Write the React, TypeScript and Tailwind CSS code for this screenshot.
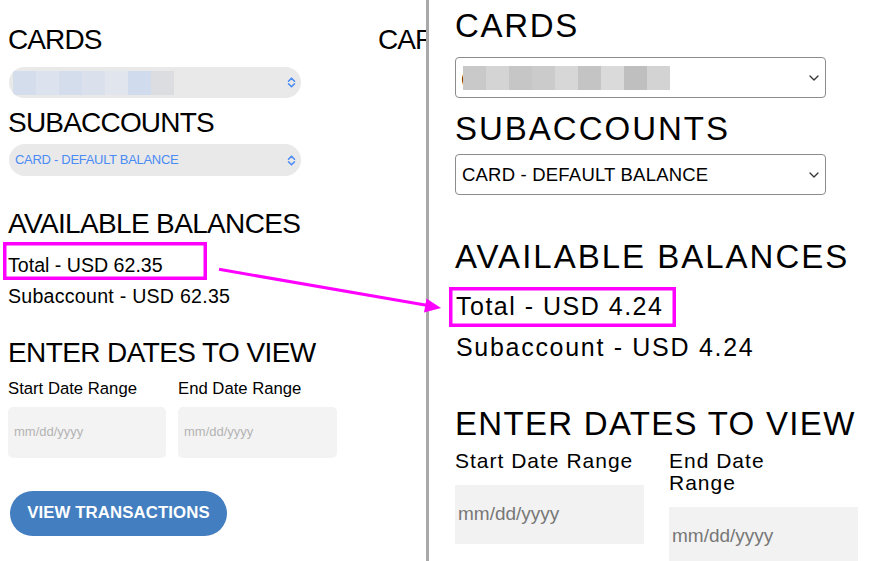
import React from "react";

function UpDown() {
  return (
    <svg width="9" height="11" viewBox="0 0 9 11" fill="none" stroke="#4b8bf4" strokeWidth="1.6" strokeLinecap="round" strokeLinejoin="round">
      <polyline points="1.5,4.2 4.5,1.2 7.5,4.2" />
      <polyline points="1.5,6.8 4.5,9.8 7.5,6.8" />
    </svg>
  );
}

function ChevDown() {
  return (
    <svg width="10" height="6" viewBox="0 0 10 6" fill="none" stroke="#333" strokeWidth="1.3" strokeLinecap="round" strokeLinejoin="round">
      <polyline points="1,1 5,5 9,1" />
    </svg>
  );
}

const leftBlocks = ["#d3ddeb", "#dce3ef", "#d4ddeb", "#dbe1ec", "#e1e5ed", "#d0dbee", "#dcdde0"];
const rightBlocks = ["#c9c9c9", "#d4d4d4", "#c6c6c6", "#cbcbcb", "#d7d7d7", "#c4c4c4", "#dadada", "#bfbfbf", "#d3d3d3"];

export default function App() {
  return (
    <div className="relative flex items-start w-[894px] h-[561px] overflow-hidden bg-white text-black font-['Liberation_Sans',Arial,sans-serif]">
      {/* Left panel */}
      <div className="flex items-start w-[426px] h-full shrink-0 overflow-hidden">
        <div className="w-[378px] shrink-0 pl-[8px] pt-[26px] flex flex-col items-start">
          <div className="text-[28px] leading-[28px] tracking-[-0.9px]">CARDS</div>
          <div className="mt-[13px] ml-[1px] h-[31px] w-[292px] shrink-0 rounded-full bg-[#e9e9e9] flex items-center overflow-hidden pr-[5px]">
            <div className="ml-[4px] flex h-[24px]">
              {leftBlocks.map((c, i) => (
                <div key={i} className="h-full w-[23px]" style={{ background: c }} />
              ))}
            </div>
            <div className="ml-auto flex items-center"><UpDown /></div>
          </div>
          <div className="mt-[11px] text-[28px] leading-[28px] tracking-[-0.8px]">SUBACCOUNTS</div>
          <div className="mt-[7px] ml-[1px] h-[32px] w-[292px] shrink-0 rounded-full bg-[#e9e9e9] flex items-center pl-[6px] pr-[5px]">
            <span className="text-[13px] tracking-[-0.3px] text-[#4b8bf4] whitespace-nowrap">CARD - DEFAULT BALANCE</span>
            <div className="ml-auto flex items-center"><UpDown /></div>
          </div>
          <div className="mt-[34px] text-[28px] leading-[28px] tracking-[-0.65px] whitespace-nowrap">AVAILABLE BALANCES</div>
          <div className="mt-[16.5px] text-[19.6px] leading-[20px]">Total - USD 62.35</div>
          <div className="mt-[11px] text-[19.6px] leading-[20px] tracking-[0.25px] whitespace-nowrap">Subaccount - USD 62.35</div>
          <div className="mt-[33px] text-[28px] leading-[28px] tracking-[-0.6px] whitespace-nowrap">ENTER DATES TO VIEW</div>
          <div className="mt-[14px] grid grid-cols-[158px_159px] gap-x-[12px]">
            <div className="flex flex-col">
              <div className="text-[16.7px] leading-[16px] whitespace-nowrap">Start Date Range</div>
              <div className="mt-[10px] h-[51px] rounded-[5px] bg-[#f3f3f3] flex items-center pl-[6px] text-[13px] text-[#b3b3b3]">mm/dd/yyyy</div>
            </div>
            <div className="flex flex-col">
              <div className="text-[16.7px] leading-[16px] whitespace-nowrap">End Date Range</div>
              <div className="mt-[10px] h-[51px] rounded-[5px] bg-[#f3f3f3] flex items-center pl-[6px] text-[13px] text-[#b3b3b3]">mm/dd/yyyy</div>
            </div>
          </div>
          <button className="mt-[33px] ml-[2px] h-[45px] w-[217px] shrink-0 rounded-full bg-[#437ec0] text-white text-[16.8px] tracking-[0.1px] font-bold flex items-center justify-center">
            VIEW TRANSACTIONS
          </button>
        </div>
        <div className="shrink-0 pt-[26px] text-[28px] leading-[28px] tracking-[-0.9px] whitespace-nowrap">CARDS</div>
      </div>

      {/* Divider */}
      <div className="w-[3px] h-full shrink-0 bg-[#a9a9a9]" />

      {/* Right panel */}
      <div className="flex-1 pl-[26px] pt-[9px] flex flex-col items-start">
        <div className="text-[33px] leading-[33px] tracking-[1.7px]">CARDS</div>
        <div className="mt-[15px] h-[41px] w-[371px] shrink-0 rounded-[4px] border-[1.5px] border-[#8c8c8c] flex items-center pl-[5px] pr-[6px] overflow-hidden">
          <span className="text-[19px] leading-none">(</span>
          <div className="-ml-[4px] flex h-[24px]">
            {rightBlocks.map((c, i) => (
              <div key={i} className="h-full w-[23px]" style={{ background: c }} />
            ))}
          </div>
          <div className="ml-auto flex items-center"><ChevDown /></div>
        </div>
        <div className="mt-[14px] text-[33px] leading-[33px] tracking-[2px]">SUBACCOUNTS</div>
        <div className="mt-[9px] h-[41px] w-[371px] shrink-0 rounded-[4px] border-[1.5px] border-[#8c8c8c] flex items-center pl-[6px] pr-[6px]">
          <span className="text-[18.5px] tracking-[0.2px] whitespace-nowrap">CARD - DEFAULT BALANCE</span>
          <div className="ml-auto flex items-center"><ChevDown /></div>
        </div>
        <div className="mt-[45px] text-[33px] leading-[33px] tracking-[2px] whitespace-nowrap">AVAILABLE BALANCES</div>
        <div className="mt-[21px] ml-[1px] text-[25px] leading-[25px] tracking-[1.5px] whitespace-nowrap">Total - USD 4.24</div>
        <div className="mt-[16px] ml-[1px] text-[25px] leading-[25px] tracking-[1.7px] whitespace-nowrap">Subaccount - USD 4.24</div>
        <div className="mt-[47px] text-[33px] leading-[33px] tracking-[1.3px] whitespace-nowrap">ENTER DATES TO VIEW</div>
        <div className="mt-[10px] grid grid-cols-[189px_189px] gap-x-[25px]">
          <div className="flex flex-col">
            <div className="text-[21px] leading-[22px] tracking-[1px] whitespace-nowrap">Start Date Range</div>
            <div className="mt-[13px] h-[59px] bg-[#f2f2f2] flex items-center pl-[3px] text-[19px] text-[#777]">mm/dd/yyyy</div>
          </div>
          <div className="flex flex-col">
            <div className="w-[140px] text-[21px] leading-[22px] tracking-[1px]">End Date Range</div>
            <div className="mt-[13px] h-[59px] bg-[#f2f2f2] flex items-center pl-[3px] text-[19px] text-[#777]">mm/dd/yyyy</div>
          </div>
        </div>
      </div>

      {/* Annotations */}
      <svg className="pointer-events-none absolute left-0 top-0" width="894" height="561" viewBox="0 0 894 561">
        <rect x="4.75" y="243.75" width="200.5" height="34.5" fill="none" stroke="#ff00ff" strokeWidth="3.5" />
        <rect x="450.75" y="288.75" width="223.5" height="36.5" fill="none" stroke="#ff00ff" strokeWidth="3.5" />
        <line x1="219" y1="269.3" x2="428" y2="305.6" stroke="#ff00ff" strokeWidth="3" />
        <polygon points="441,308 424,312.6 426.5,298.4" fill="#ff00ff" />
      </svg>
    </div>
  );
}
